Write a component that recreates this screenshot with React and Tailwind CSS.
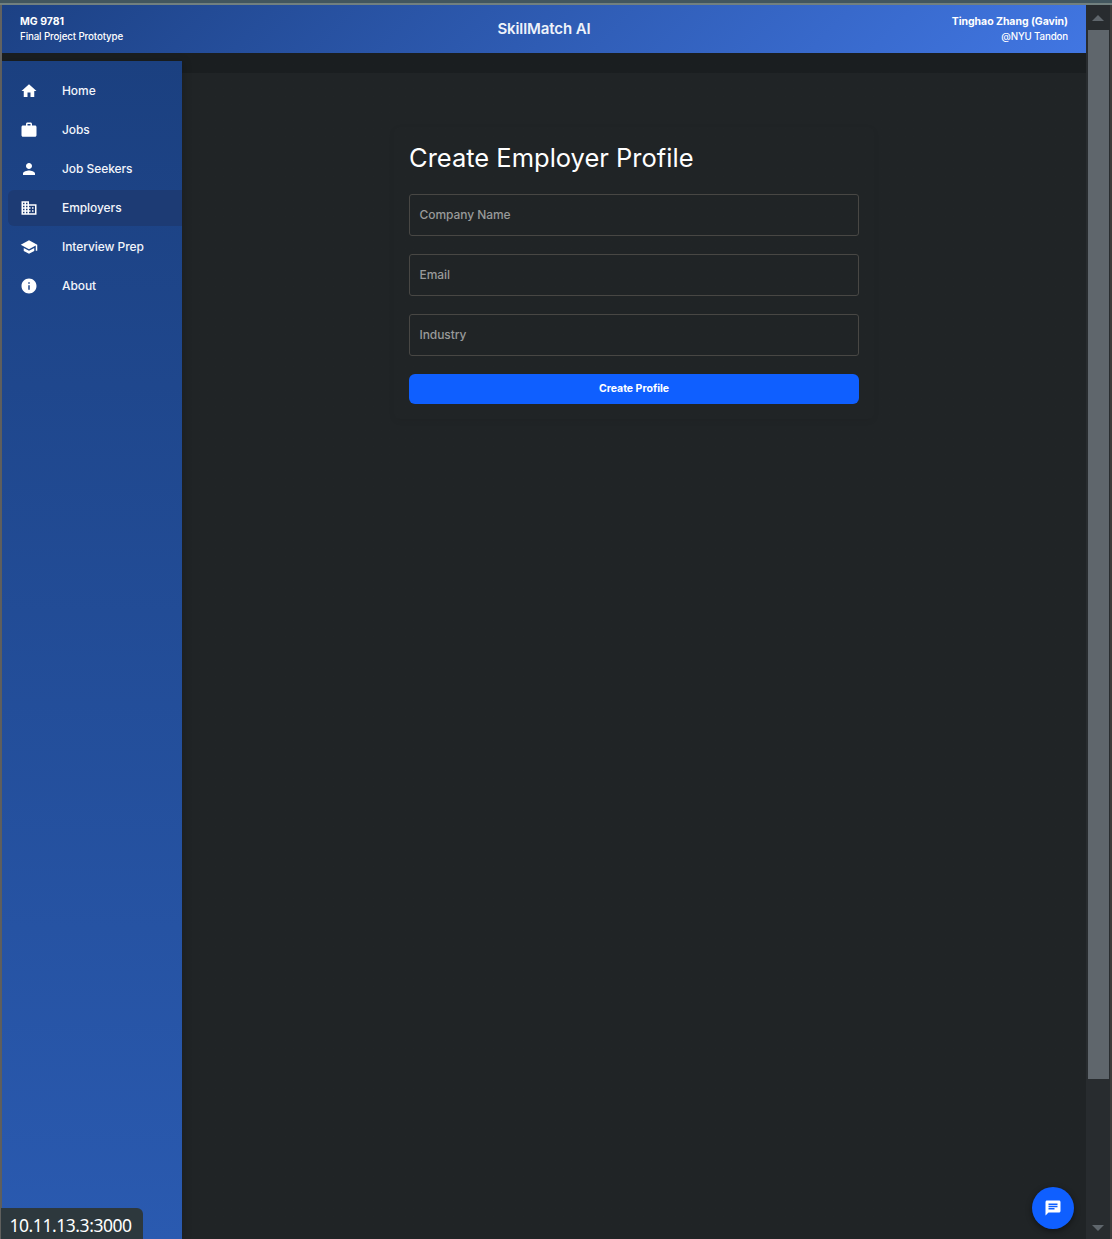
import React from "react";
import {
  MdHome, MdWork, MdPerson, MdBusiness, MdSchool, MdInfo, MdChat,
} from "react-icons/md";

const NAV = [
  { label: "Home", Icon: MdHome },
  { label: "Jobs", Icon: MdWork },
  { label: "Job Seekers", Icon: MdPerson },
  { label: "Employers", Icon: MdBusiness, active: true },
  { label: "Interview Prep", Icon: MdSchool },
  { label: "About", Icon: MdInfo },
];

const FIELDS = ["Company Name", "Email", "Industry"];

function Header() {
  return (
    <header className="flex h-12 shrink-0 items-center justify-between bg-[linear-gradient(135deg,#1c4184_0%,#4176e2_100%)] px-[18px] text-white">
      <div className="w-[200px]">
        <div className="text-[10.5px] leading-[15px] font-bold">MG 9781</div>
        <div className="text-[9.75px] leading-[15px] font-medium tracking-[-0.12px]">Final Project Prototype</div>
      </div>
      <h1 className="text-[15px] leading-6 font-semibold tracking-[-0.1px] text-[#eef2fa]">SkillMatch AI</h1>
      <div className="w-[200px] text-right">
        <div className="text-[10.5px] leading-[15px] font-bold tracking-[-0.05px]">Tinghao Zhang (Gavin)</div>
        <div className="text-[9.75px] leading-[15px] font-medium tracking-[-0.15px]">@NYU Tandon</div>
      </div>
    </header>
  );
}

function Sidebar() {
  return (
    <nav className="mt-2 flex w-[180px] shrink-0 flex-col gap-[3px] bg-linear-to-b from-[#1b4080] to-[#2a5ab0] pt-3 text-[#f2f5fb] shadow-[2px_0_8px_rgba(0,0,0,0.15)]">
      {NAV.map(({ label, Icon, active }) => (
        <div
          key={label}
          className={
            "ml-1.5 flex h-9 items-center rounded-l-md pl-3 " + (active ? "bg-[#1d3b74]" : "")
          }
        >
          <Icon className="mr-6 size-[18px] text-white" />
          <span className="text-[12px] leading-[18px] font-medium tracking-[-0.07px]">{label}</span>
        </div>
      ))}
    </nav>
  );
}

function ProfileForm() {
  return (
    <section className="mx-auto mt-[54px] flex w-[480px] flex-col rounded-md px-[15px] pt-[15px] pb-[15px] shadow-[0_2px_6px_rgba(0,0,0,0.06)]">
      <h2 className="mb-[20px] text-[25.5px] leading-[32px] text-white">Create Employer Profile</h2>
      <div className="flex flex-col gap-[18px]">
        {FIELDS.map((name) => (
          <div
            key={name}
            className="flex h-[42px] items-center rounded-[3px] border border-[#484744] px-[9.5px] text-[12px] font-medium tracking-[-0.07px] text-[#989a9a]"
          >
            {name}
          </div>
        ))}
        <button className="h-[30px] rounded-md bg-[#0f5fff] pb-px text-[10.5px] font-bold text-white">
          Create Profile
        </button>
      </div>
    </section>
  );
}

function Scrollbar() {
  return (
    <div className="flex w-6 shrink-0 flex-col items-center bg-[#282c2f]">
      <svg viewBox="0 0 12 6" className="mt-[10px] h-[6px] w-3 fill-[#5f666c]">
        <path d="M6 0 12 6H0z" />
      </svg>
      <div className="mt-[9px] h-[1049px] w-[21px] bg-[#5f666c]" />
      <svg viewBox="0 0 12 6" className="mt-auto mb-2 h-[6px] w-3 fill-[#5f666c]">
        <path d="M0 0h12L6 6z" />
      </svg>
    </div>
  );
}

export default function App() {
  return (
    <div className="relative flex h-[1239px] w-[1112px] flex-col overflow-hidden bg-[#202426] font-['Inter',sans-serif]">
      <div className="h-[3px] shrink-0 bg-[#42565e]" />
      <div className="h-[2px] shrink-0 bg-[#71807f]" />
      <div className="flex min-h-0 flex-1">
        <div className="w-[2px] shrink-0 bg-[#626260]" />
        <div className="flex min-w-0 flex-1 flex-col">
          <Header />
          <div className="flex min-h-0 flex-1 bg-linear-to-b from-[#1a1e20] from-[20px] to-[#202426] to-[20px]">
            <Sidebar />
            <main className="flex-1 pt-5">
              <ProfileForm />
            </main>
          </div>
        </div>
        <Scrollbar />
        <div className="w-[2px] shrink-0 bg-[#3e3c3b]" />
      </div>

      <button
        aria-label="Open chat"
        className="absolute right-[38px] bottom-[10px] flex size-[42px] items-center justify-center rounded-full bg-[#0f5fff] text-white shadow-[0_2px_6px_rgba(0,0,0,0.45)]"
      >
        <MdChat className="size-[18px]" />
      </button>
      <div className="absolute bottom-0 left-px h-[31px] w-[142px] rounded-tr-md bg-[#2d383d] pl-[8.5px] font-['Noto_Sans',sans-serif] text-[17.5px] leading-[34px] tracking-[-0.45px] text-white">
        10.11.13.3:3000
      </div>
    </div>
  );
}
